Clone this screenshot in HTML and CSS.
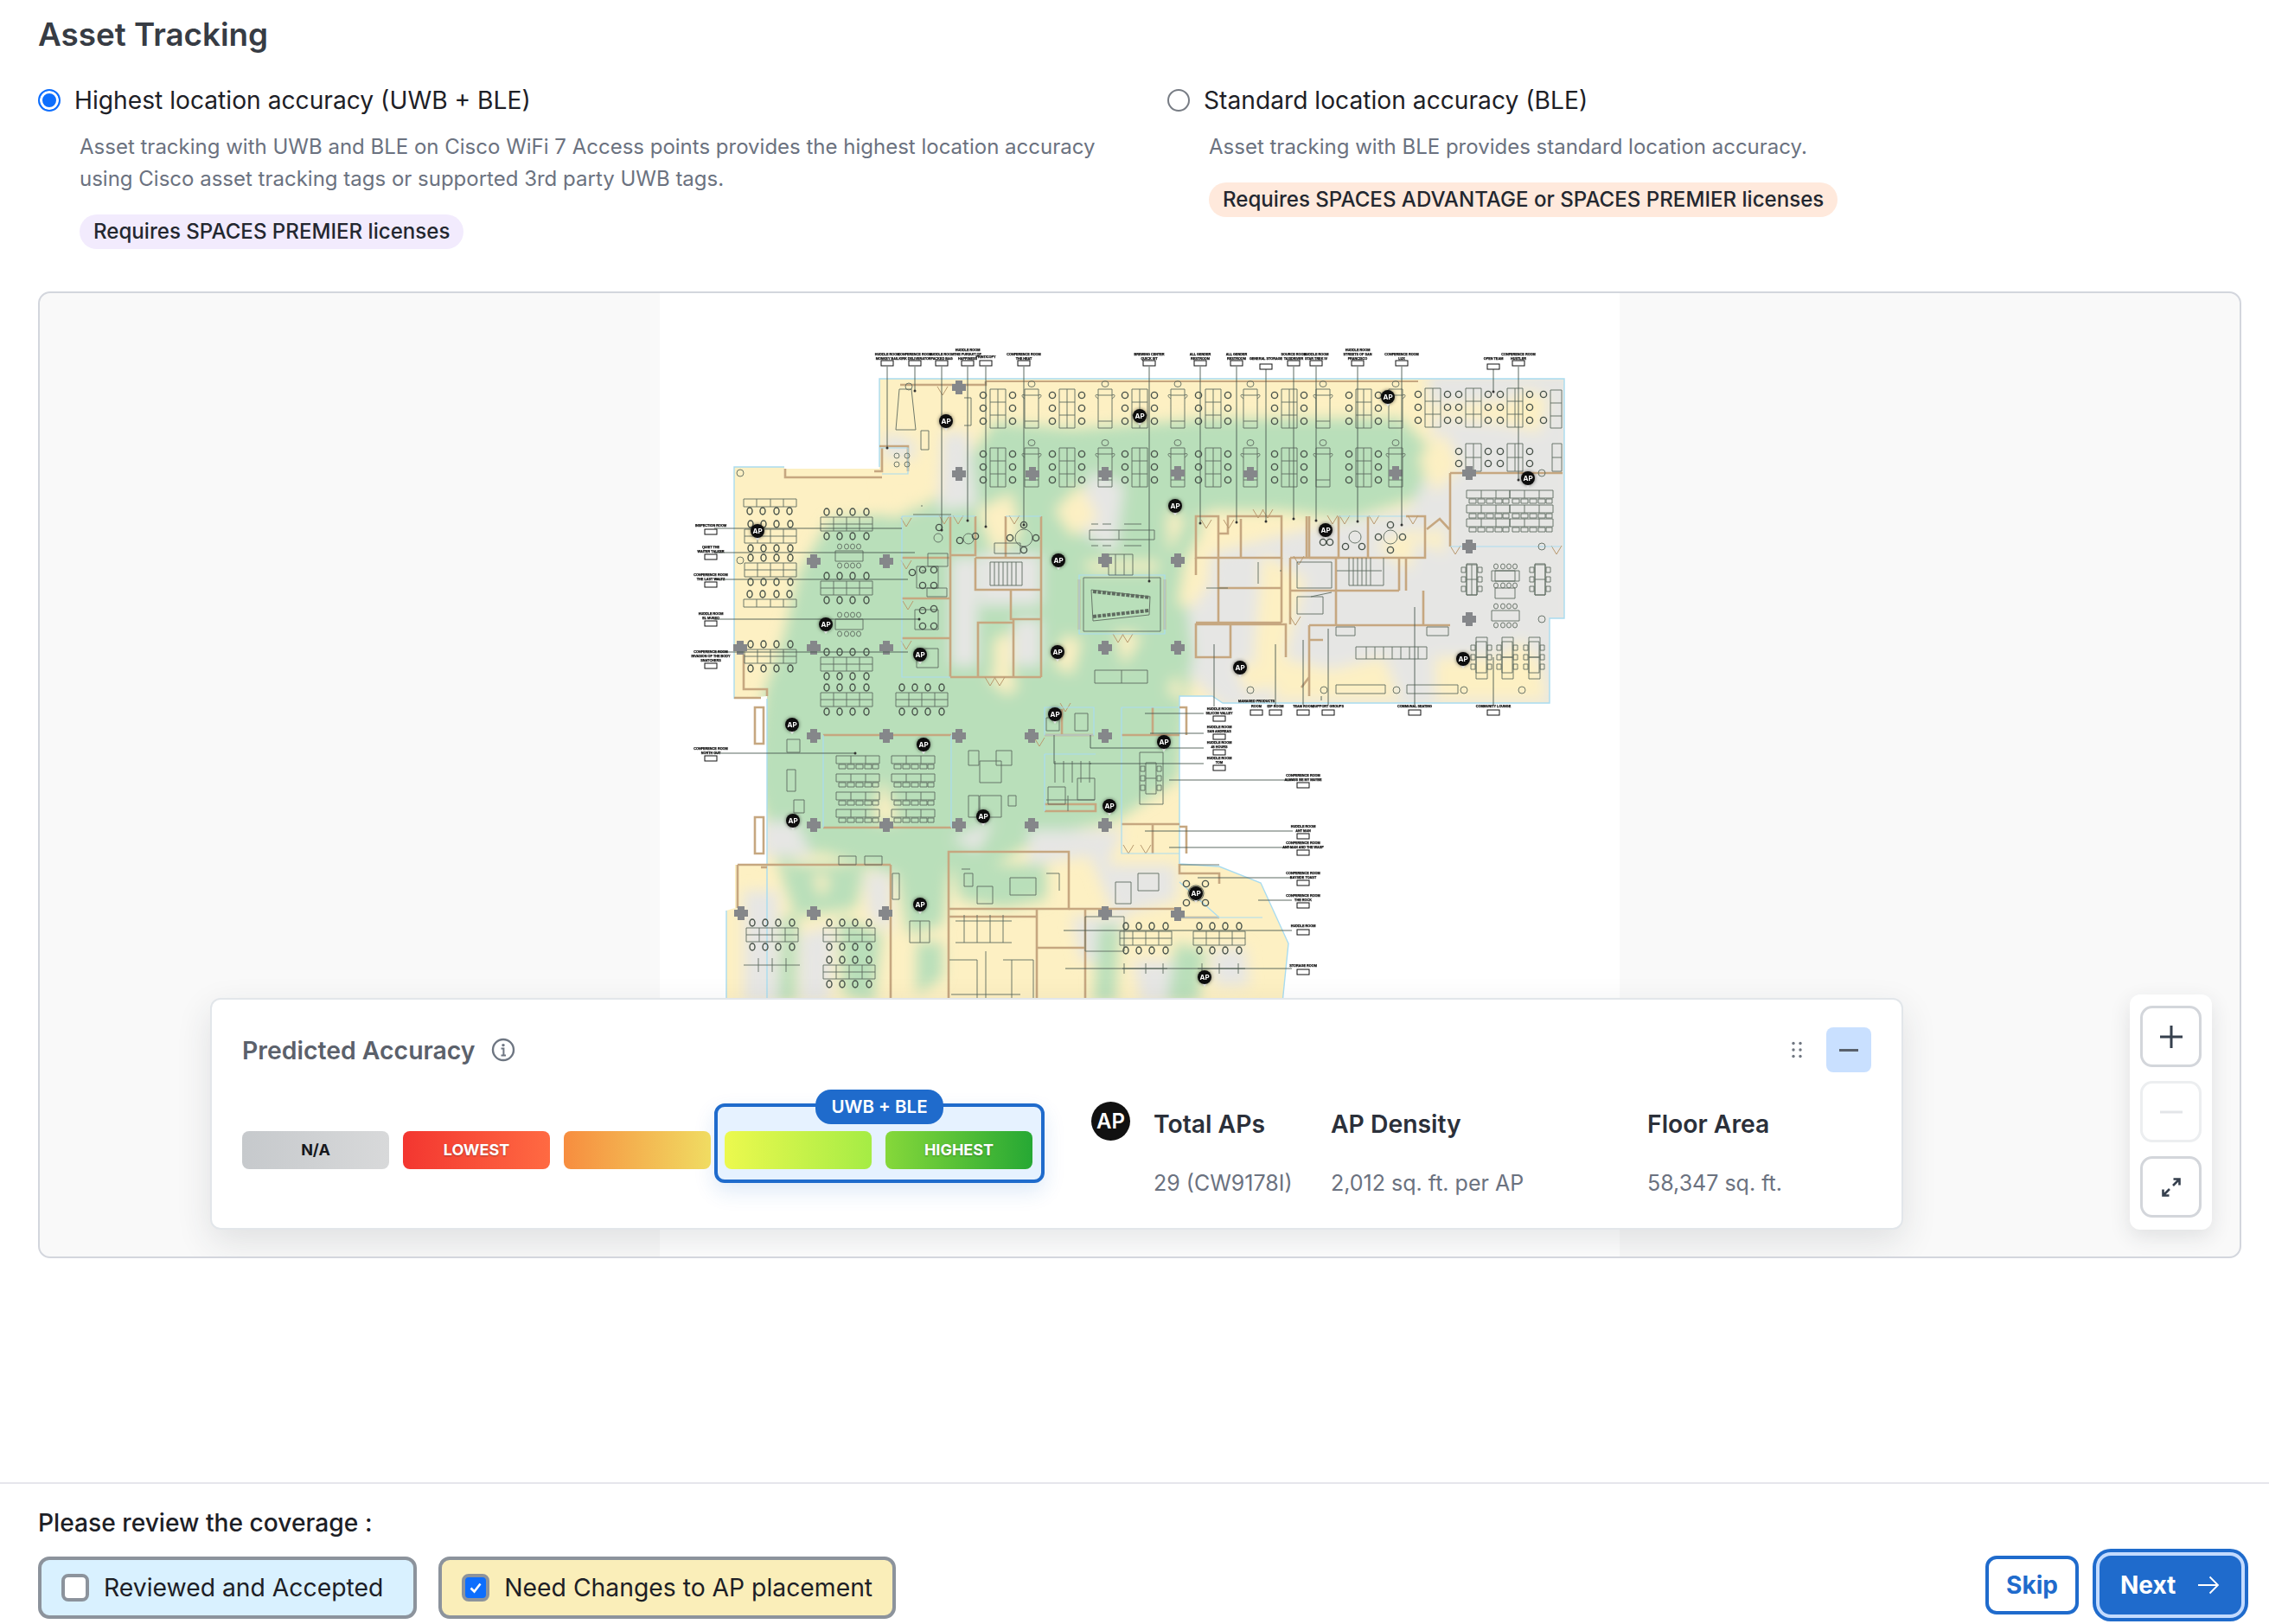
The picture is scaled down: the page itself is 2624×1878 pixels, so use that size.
FILE: index.html
```html
<!DOCTYPE html>
<html>
<head>
  <title>Asset Tracking</title>
  <meta http-equiv="Content-Type" content="text/html; charset=utf-8" />
  <link rel="stylesheet" href="styles.css">
</head>
<body>
  <main class="content">
    <h1 class="page-title">Asset Tracking</h1>

    <div class="options">
      <div class="option">
        <div class="option-label"><span class="radio radio-on"></span>Highest location accuracy (UWB + BLE)</div>
        <p class="option-desc">Asset tracking with UWB and BLE on Cisco WiFi 7 Access points provides the highest location accuracy using Cisco asset tracking tags or supported 3rd party UWB tags.</p>
        <span class="pill pill-purple">Requires SPACES PREMIER licenses</span>
      </div>
      <div class="option">
        <div class="option-label"><span class="radio"></span>Standard location accuracy (BLE)</div>
        <p class="option-desc">Asset tracking with BLE provides standard location accuracy.</p>
        <span class="pill pill-orange">Requires SPACES ADVANTAGE or SPACES PREMIER licenses</span>
      </div>
    </div>

    <section class="canvas">
      <svg class="plan" width="1110" height="1114" viewBox="763 339 1110 1114">
        <defs>
          <clipPath id="outline">
            <path d="M1017 438H1809V715H1792V813H1414L1402 805H1364V999L1410 1002 1458 1021 1490 1091 1483 1160H840V1053L850 1050V1000H887V805L849 808V540H907V542H1017Z"/>
          </clipPath>
          <filter id="soft" x="-10%" y="-10%" width="120%" height="120%"><feGaussianBlur stdDeviation="8"/></filter>
          <filter id="glow" x="-50%" y="-50%" width="200%" height="200%"><feDropShadow dx="0" dy="0" stdDeviation="2" flood-color="#000" flood-opacity=".55"/></filter>

          <g id="chair"><circle class="seat" r="3.6"/></g>
          <g id="desk6">
            <path d="M-9-22H9V23H-9ZM0-22V23M-9-7H9M-9 8H9"/>
            <use href="#chair" x="-17" y="-15"/><use href="#chair" x="-17" y="0"/><use href="#chair" x="-17" y="15"/>
            <use href="#chair" x="17" y="-15"/><use href="#chair" x="17" y="0"/><use href="#chair" x="17" y="15"/>
          </g>
          <g id="desk2">
            <path d="M-8-22H8V23H-8ZM-8-15H8M-8 15H8M-8-15C-12-17-12-13-8-11M8-15C12-17 12-13 8-11"/>
            <ellipse cx="0" cy="-28" rx="4" ry="3.5"/>
          </g>
          <g id="desk4">
            <path d="M-30-8H30V8H-30ZM-15-8V8M0-8V8M15-8V8M-30 0H30"/>
            <ellipse class="seat" cx="-23" cy="-14" rx="3" ry="4"/><ellipse class="seat" cx="-8" cy="-14" rx="3" ry="4"/><ellipse class="seat" cx="7" cy="-14" rx="3" ry="4"/><ellipse class="seat" cx="23" cy="-14" rx="3" ry="4"/>
            <ellipse class="seat" cx="-23" cy="14" rx="3" ry="4"/><ellipse class="seat" cx="-8" cy="14" rx="3" ry="4"/><ellipse class="seat" cx="7" cy="14" rx="3" ry="4"/><ellipse class="seat" cx="23" cy="14" rx="3" ry="4"/>
          </g>
          <g id="table">
            <path d="M-16-6H16V6H-16Z"/>
            <ellipse cx="-11" cy="-11" rx="2.5" ry="3"/><ellipse cx="-3" cy="-11" rx="2.5" ry="3"/><ellipse cx="4" cy="-11" rx="2.5" ry="3"/><ellipse cx="11" cy="-11" rx="2.5" ry="3"/>
            <ellipse cx="-11" cy="11" rx="2.5" ry="3"/><ellipse cx="-3" cy="11" rx="2.5" ry="3"/><ellipse cx="4" cy="11" rx="2.5" ry="3"/><ellipse cx="11" cy="11" rx="2.5" ry="3"/>
          </g>
          <g id="bench3">
            <path d="M-25-4H25V5H-25ZM-8-4V5M9-4V5"/>
            <path d="M-22 6H-14V11H-22ZM-12 6H-4V11H-12ZM-2 6H6V11H-2ZM8 6H16V11H8ZM17 6H24V11H17Z"/>
          </g>
          <g id="tvtable">
            <path d="M-6-18H6V18H-6ZM-6 0H6"/>
            <path d="M-12-14H-7V-8H-12ZM-12-3H-7V3H-12ZM-12 8H-7V14H-12ZM7-14H12V-8H7ZM7-3H12V3H7ZM7 8H12V14H7Z"/>
          </g>
          <path id="door" d="M-6-5 0 5 6-5"/>
          <path id="cross" d="M-4-8H4V-4H8V4H4V8H-4V4H-8V-4H-4Z"/>
          <g id="ap">
            <path d="M-3 7H3L0 11Z" fill="#fff"/>
            <circle r="8" fill="#111" filter="url(#glow)"/>
            <text class="ap-text" y="2.6">AP</text>
          </g>
          <rect id="tagbox" class="tag-box" x="-7" y="0" width="14" height="6"/>
        </defs>

        <rect class="plan-bg" x="763" y="339" width="1110" height="1114"/>

        <!-- heat map -->
        <g clip-path="url(#outline)">
          <rect x="830" y="430" width="990" height="740" fill="#fdf0c3"/>
          <g filter="url(#soft)">
            <path fill="#b9dfba" d="M1150 488 1240 496 1400 484 1620 484 1655 520 1640 575 1560 600 1480 590 1400 590 1370 650 1392 720 1375 790 1364 900 1290 950 1210 965 1150 1000 1030 1010 950 985 900 1000 872 900 884 800 905 740 925 660 960 600 1030 595 1100 560Z"/>
            <path fill="#e6e6e4" d="M1650 430H1820V820H1415L1375 780 1395 700 1400 640 1520 610 1630 590 1660 530Z"/>
            <path fill="#e6e6e4" d="M1022 530H1058V510L1022 500ZM1090 500 1120 500 1130 585 1085 590ZM1100 645H1130V770H1100ZM1132 640H1204V700H1132ZM1172 716H1204V770H1172ZM1262 545 1300 560 1290 640 1240 610ZM1370 680 1480 700 1440 780 1380 760Z"/>
            <path fill="#e6e6e4" d="M860 1030H900V1160H860ZM925 1080 965 1070 960 1160H925ZM1000 1010H1030V1080L1005 1060ZM1190 960 1300 960 1280 1000 1360 1000V1040L1290 1060 1260 990 1190 1000ZM1240 1060H1300L1290 1120 1250 1110ZM1310 1110H1360V1160H1320ZM920 950H880V990H940ZM1150 950 1100 970 1130 985ZM1400 1100 1440 1095 1445 1140 1405 1140Z"/>
            <path fill="#b9dfba" d="M900 1000H1000L990 1050 920 1060ZM905 1060H922L920 1160H900ZM970 1060 1020 1080 1010 1160 975 1150ZM1035 1000 1100 990 1090 1070 1050 1080ZM1060 1090H1090V1130L1060 1150ZM1100 1000H1210V1040L1160 1050 1110 1040ZM1270 1070H1295L1290 1160H1265ZM1360 1090 1395 1100 1385 1160H1350Z"/>
            <path fill="#fdf0c3" d="M1018 540 1048 560 1056 590 1030 600ZM1040 540 1090 570 1060 590ZM1130 590 1170 570 1180 620 1150 640ZM1220 590 1250 560 1270 600 1240 620ZM1380 600 1410 590 1400 610ZM1350 590 1370 600 1352 640ZM1370 650 1392 660 1385 700 1362 700ZM1254 650H1340L1338 660H1260ZM1230 735 1250 740 1240 780 1220 770ZM1150 740 1170 730 1170 790 1150 795ZM1140 780 1180 790 1165 805ZM1290 730 1320 735 1300 770ZM1360 780 1370 810 1350 800Z"/>
            <path fill="#fdf0c3" d="M1460 640 1510 670 1480 780 1450 760ZM1430 770 1480 760 1560 780 1440 800ZM1480 790 1600 760 1620 810H1470ZM1660 760 1780 760 1790 810H1660ZM1720 770 1760 740 1780 770ZM1760 450 1790 460 1780 500 1740 490ZM1640 470 1760 462 1740 490 1640 480ZM1630 620 1670 610 1670 640ZM1590 630 1640 610 1630 660ZM1640 530 1670 500 1690 540 1660 570ZM940 1010 960 1015 950 1040ZM1020 900 1040 950 1010 950Z"/>
          </g>
        </g>

        <!-- outer glass line -->
        <path class="glass" d="M1017 540V438H1809V715H1792V813H1414L1402 805H1364V999L1410 1002 1458 1021 1490 1091 1483 1160M887 808V1160M840 1160V1053M849 808V540H907"/>

        <!-- walls -->
        <g class="walls">
          <path d="M1041 445H1140V441M1017 516H1050V517M1020 518V545H1011M908 542V552H1020M849 807H880M860 757V797H887V805M1050 516V545"/>
          <path class="wall-thin" d="M1140 441H1640"/>
          <path d="M1043 645H1099M1043 692H1099M1043 738H1099M1099 597V783M1128 597V642H1099M1163 597V645M1099 783H1204M1204 597V783M1128 645H1204M1128 645V682H1204M1169 682V716H1204M1131 720H1172V783H1131ZM1172 716V783"/>
          <path d="M1383 597H1409V617H1420V597H1482V645H1383ZM1409 617V645M1435 600V645M1511 597V645M1514 597V645M1514 645H1548V597M1582 597V645M1626 597H1648V645H1626"/>
          <path d="M1383 645V665M1409 645V720M1482 645V720M1409 680H1482M1383 720H1482M1383 722H1423V760H1383ZM1492 645V722M1492 645H1626M1545 645V723M1492 683H1618M1618 645V683M1646 683V723M1626 645V683M1514 723H1677M1677 547V632M1677 547H1807M1650 612L1665 600 1676 612"/>
          <path d="M1423 722H1487V760M1487 722V760M1514 723V805M1514 740H1530M1514 783 1505 795"/>
          <path d="M1248 670V728M1347 670V728"/>
          <path d="M1030 1000V1157M853 1000H1030M853 1000V1050M880 1003H887"/>
          <path d="M952 850H1100M952 957H1100"/>
          <path d="M1364 850H1297M1297 953H1364M1333 818V850M1333 953V987M1364 818H1372V850M1364 956H1372V987M873 818H883V860H873ZM873 945H883V987H873Z"/>
          <path d="M1097 985H1236V1051H1097ZM1097 1051V1157M1097 1060H1199M1199 1051V1157M1208 938H1267V930H1208"/>
          <path d="M1255 1051V1157M1199 1096H1255M1364 999V1010H1410V1022M1410 1061H1364V1051M1236 1051H1364"/>
          <path d="M1208 850H1265M1228 820V850"/>
        </g>

        <!-- doors -->
        <g class="doors">
          <use href="#door" x="1092" y="601"/><use href="#door" x="1108" y="601"/><use href="#door" x="1173" y="601"/><use href="#door" x="1293" y="738"/><use href="#door" x="1304" y="738"/>
          <use href="#door" x="1145" y="788"/><use href="#door" x="1156" y="788"/><use href="#door" x="1455" y="594"/><use href="#door" x="1466" y="594"/><use href="#door" x="1395" y="606"/><use href="#door" x="1421" y="606"/>
          <use href="#door" x="1502" y="648"/><use href="#door" x="1541" y="601"/><use href="#door" x="1555" y="601"/><use href="#door" x="1589" y="601"/><use href="#door" x="1634" y="601"/><use href="#door" x="1683" y="636"/><use href="#door" x="1800" y="636"/>
          <use href="#door" x="1498" y="718"/><use href="#door" x="1048" y="604"/><use href="#door" x="1048" y="653"/><use href="#door" x="1048" y="746"/><use href="#door" x="1050" y="700"/>
          <use href="#door" x="1090" y="452"/><use href="#door" x="1202" y="858"/><use href="#door" x="1232" y="818"/><use href="#door" x="1305" y="982"/><use href="#door" x="1325" y="982"/>
        </g>

        <!-- thin glass rooms -->
        <path class="glass-in" d="M1017 518H1050V548H1020M1043 597H1128M1043 597V783H1099M1163 597H1204M1248 665H1347V733H1248ZM1208 818H1265V850H1208ZM1208 872H1267M1297 818H1364M1297 818V987H1364M952 850V957M1100 850V957M1548 597H1626M1677 632H1805M1208 872V938M1364 1020 1410 1061M1364 1061H1460"/>

        <!-- rooms detail -->
        <g class="ink">
          <path d="M1040 450H1054L1059 497H1036Z"/>
          <path d="M1065 498H1074V520H1065ZM1115 460H1123V492H1115M1065 585H1067"/>
          <path d="M1150 628H1180V640H1150ZM1145 650H1182V677H1145ZM1150 650V677M1155 650V677M1160 650V677M1165 650V677M1170 650V677M1175 650V677"/>
          <path d="M1056 595H1100M1066 660H1070M1073 640H1096V655H1073ZM1072 680H1095V690H1072ZM1260 613H1335V624H1260ZM1294 613V624M1262 606H1270M1275 606H1285M1300 606H1320M1262 631H1270M1275 631H1285M1300 631H1320M1266 775H1327V790H1266ZM1297 775V790"/>
          <path d="M1282 641H1310V665H1282ZM1290 641V665M1300 641V665"/>
          <path d="M1253 668H1342V730H1253ZM1262 682 1330 690 1329 711 1264 718Z"/>
          <path class="chain" d="M1264 684 1330 691M1264 713 1329 706"/>
          <path d="M1395 680H1420M1540 685 1516 690M1500 650H1540V680H1500ZM1480 660H1482M1455 650V675M1546 660H1598M1560 645V677H1600V645M1565 645V677M1570 645V677M1575 645V677M1580 645V677M1585 645V677"/>
          <path d="M1500 690H1530V710H1500ZM1568 748H1650V762H1568ZM1580 748V762M1590 748V762M1600 748V762M1610 748V762M1620 748V762M1630 748V762M1640 748V762M1545 725H1567V735H1545ZM1650 725H1675V735H1650ZM1545 792H1602V802H1545ZM1627 792H1686V802H1627Z"/>
          <path d="M1702 653V688M1696 653H1708V688H1696ZM1729 660H1752V672H1729ZM1729 680H1752V692H1729ZM1775 653H1787V688H1775Z"/>
          <path d="M1707 737H1720V785H1707ZM1707 760H1720M1737 737H1750V785H1737ZM1737 760H1750M1768 737H1781V785H1768ZM1768 760H1781"/>
          <path d="M1130 1025H1148V1045H1130ZM1168 1015H1198V1035H1168ZM1115 1010H1125V1025H1115ZM1112 1005H1122M1210 1010H1225V1030"/>
          <path d="M1220 880V905M1230 880V905M1240 880V905M1250 880V905M1260 880V905M1210 925H1266M1235 920V938M1246 900H1266V925H1246ZM1212 910H1232V930H1212Z"/>
          <path d="M1318 870H1345V930H1318Z"/>
          <path d="M1115 1058V1090M1130 1058V1090M1145 1058V1090M1160 1058V1090M1105 1090H1170M1105 1065H1170"/>
          <path d="M1120 868H1132V885H1120ZM1152 868H1170V885H1152ZM1133 880H1158V905H1133ZM1133 920H1158V945H1133ZM1120 920H1132V945H1120ZM1166 920H1175V932H1166Z"/>
          <path d="M1255 1060H1300V1100H1255ZM1316 1010H1340V1030H1316ZM1290 1020H1308V1045H1290ZM1365 1000H1410"/>
          <path d="M910 890H920V915H910ZM918 925H930V940H918ZM910 855H925V870H910ZM1210 830H1225V845H1210ZM1243 825H1258V845H1243Z"/>
          <path d="M860 1116H925M877 1108V1124M893 1108V1124M909 1108V1124"/>
          <path d="M1298 1120H1350M1385 1120H1440M1300 1114V1126M1325 1114V1126M1345 1114V1126M1390 1114V1126M1410 1114V1126M1432 1114V1126"/>
          <path d="M1098 1110H1130M1130 1110V1155M1100 1150H1180M1140 1100V1155M1160 1110H1195V1155M1170 1110V1155"/>
          <path d="M1064 1065V1090M1052 1065H1075V1090H1052Z"/>
          <path d="M1000 990H1020V1000H1000ZM970 990H990V1000H970ZM1032 1010H1040V1040H1032Z"/>
        </g>

        <!-- workstation rows -->
        <g class="ink">
          <use href="#desk6" x="1154" y="472"/><use href="#desk2" x="1193" y="472"/><use href="#desk6" x="1234" y="472"/><use href="#desk2" x="1278" y="472"/>
          <use href="#desk6" x="1318" y="472"/><use href="#desk2" x="1362" y="472"/><use href="#desk6" x="1403" y="472"/><use href="#desk2" x="1446" y="472"/>
          <use href="#desk6" x="1491" y="472"/><use href="#desk2" x="1530" y="472"/><use href="#desk6" x="1577" y="472"/><use href="#desk2" x="1614" y="472"/>
          <use href="#desk6" x="1657" y="471"/><use href="#desk6" x="1704" y="471"/><use href="#desk6" x="1752" y="471"/>
          <path d="M1793 451H1806V495H1793ZM1793 466H1806M1793 481H1806"/><use href="#chair" x="1785" y="456"/><use href="#chair" x="1785" y="486"/>
          <use href="#desk6" x="1154" y="540"/><use href="#desk2" x="1193" y="540"/><use href="#desk6" x="1234" y="540"/><use href="#desk2" x="1278" y="540"/>
          <use href="#desk6" x="1318" y="540"/><use href="#desk2" x="1362" y="540"/><use href="#desk6" x="1403" y="540"/><use href="#desk2" x="1446" y="540"/>
          <use href="#desk6" x="1491" y="540"/><use href="#desk2" x="1530" y="540"/><use href="#desk6" x="1577" y="540"/><use href="#desk2" x="1614" y="540"/>
          <path d="M1695 513H1713V545H1695ZM1704 513V545M1695 529H1713M1743 513H1761V545H1743ZM1752 513V545M1743 529H1761M1795 513H1806V545H1795ZM1795 529H1806"/>
          <use href="#chair" x="1687" y="522"/><use href="#chair" x="1721" y="522"/><use href="#chair" x="1687" y="536"/><use href="#chair" x="1721" y="536"/>
          <use href="#chair" x="1735" y="522"/><use href="#chair" x="1769" y="522"/><use href="#chair" x="1735" y="536"/><use href="#chair" x="1769" y="536"/>

          <path d="M860 577H921V586H860ZM875 577V586M891 577V586M906 577V586"/>
          <use href="#desk4" x="891" y="620"/><use href="#desk4" x="891" y="659"/><use href="#desk4" x="891" y="759"/>
          <path d="M860 693H921V702H860ZM875 693V702M891 693V702M906 693V702"/>
          <g class="seat"><ellipse cx="867" cy="591" rx="3" ry="4"/><ellipse cx="882" cy="591" rx="3" ry="4"/><ellipse cx="898" cy="591" rx="3" ry="4"/><ellipse cx="913" cy="591" rx="3" ry="4"/>
          <ellipse cx="867" cy="687" rx="3" ry="4"/><ellipse cx="882" cy="687" rx="3" ry="4"/><ellipse cx="898" cy="687" rx="3" ry="4"/><ellipse cx="913" cy="687" rx="3" ry="4"/></g>

          <use href="#desk4" x="979" y="606"/><use href="#desk4" x="979" y="680"/><use href="#desk4" x="979" y="768"/><use href="#desk4" x="979" y="809"/><use href="#desk4" x="1066" y="809"/>
          <use href="#table" x="982" y="643"/><use href="#table" x="982" y="722"/>
          <use href="#desk4" x="893" y="1081"/><use href="#desk4" x="982" y="1081"/><use href="#desk4" x="982" y="1124"/><use href="#desk4" x="1325" y="1085"/><use href="#desk4" x="1410" y="1085"/>

          <path d="M1060 655H1085V680H1060ZM1058 705H1085V728H1058ZM1060 750H1085V772H1060Z"/>
          <use href="#chair" x="1055" y="662"/><use href="#chair" x="1067" y="659"/><use href="#chair" x="1080" y="659"/><use href="#chair" x="1067" y="677"/><use href="#chair" x="1080" y="677"/>
          <use href="#chair" x="1067" y="706"/><use href="#chair" x="1080" y="704"/><use href="#chair" x="1067" y="724"/><use href="#chair" x="1080" y="724"/>

          <use href="#chair" x="1086" y="610"/><circle cx="1085" cy="622" r="5"/><circle cx="1120" cy="623" r="6"/><use href="#chair" x="1110" y="625"/><use href="#chair" x="1128" y="620"/>
          <circle cx="1184" cy="622" r="10"/><use href="#chair" x="1184" y="607"/><use href="#chair" x="1184" y="636"/><use href="#chair" x="1168" y="622"/><use href="#chair" x="1198" y="622"/>
          <circle cx="1051" cy="447" r="4"/><circle cx="856" cy="547" r="4"/><circle cx="856" cy="648" r="4"/>
          <circle cx="1037" cy="527" r="3"/><circle cx="1049" cy="527" r="3"/><circle cx="1037" cy="537" r="3"/><circle cx="1049" cy="537" r="3"/>

          <use href="#bench3" x="992" y="878"/><use href="#bench3" x="1056" y="878"/><use href="#bench3" x="992" y="899"/><use href="#bench3" x="1056" y="899"/>
          <use href="#bench3" x="992" y="920"/><use href="#bench3" x="1056" y="920"/><use href="#bench3" x="992" y="940"/><use href="#bench3" x="1056" y="940"/>
          <use href="#tvtable" x="1331" y="900"/>

          <use href="#bench3" x="1721" y="571"/><use href="#bench3" x="1771" y="571"/><use href="#bench3" x="1721" y="588"/><use href="#bench3" x="1771" y="588"/><use href="#bench3" x="1721" y="604"/><use href="#bench3" x="1771" y="604"/>
          <use href="#table" x="1741" y="712"/><use href="#table" x="1741" y="666"/>
          <use href="#tvtable" x="1702" y="670"/><use href="#tvtable" x="1781" y="670"/><use href="#tvtable" x="1713" y="760"/><use href="#tvtable" x="1743" y="760"/><use href="#tvtable" x="1774" y="760"/>
          <circle cx="1783" cy="547" r="4"/><circle cx="1783" cy="632" r="4"/><circle cx="1783" cy="716" r="4"/><circle cx="1760" cy="798" r="4"/><circle cx="1693" cy="798" r="4"/><circle cx="1615" cy="798" r="4"/><circle cx="1531" cy="798" r="4"/><circle cx="1446" cy="798" r="4"/>
          <circle cx="1567" cy="621" r="7"/><circle cx="1608" cy="621" r="8"/><use href="#chair" x="1608" y="607"/><use href="#chair" x="1608" y="636"/><use href="#chair" x="1594" y="621"/><use href="#chair" x="1622" y="621"/>
          <use href="#chair" x="1530" y="627"/><use href="#chair" x="1538" y="627"/><use href="#chair" x="1556" y="632"/><use href="#chair" x="1575" y="632"/>
          <circle cx="1383" cy="1033" r="9"/><use href="#chair" x="1372" y="1022"/><use href="#chair" x="1394" y="1022"/><use href="#chair" x="1372" y="1044"/><use href="#chair" x="1394" y="1044"/>
        </g>

        <!-- dividers -->
        <g class="posts">
          <use href="#cross" x="1109" y="448"/><use href="#cross" x="1109" y="548"/><use href="#cross" x="1194" y="548"/><use href="#cross" x="1278" y="548"/><use href="#cross" x="1362" y="547"/><use href="#cross" x="1446" y="548"/><use href="#cross" x="1614" y="547"/><use href="#cross" x="1699" y="547"/><use href="#cross" x="1699" y="632"/><use href="#cross" x="1699" y="716"/>
          <use href="#cross" x="941" y="649"/><use href="#cross" x="1025" y="649"/><use href="#cross" x="1278" y="648"/><use href="#cross" x="1362" y="648"/>
          <use href="#cross" x="856" y="749"/><use href="#cross" x="941" y="749"/><use href="#cross" x="1025" y="749"/><use href="#cross" x="1278" y="749"/><use href="#cross" x="1362" y="749"/>
          <use href="#cross" x="941" y="851"/><use href="#cross" x="1025" y="851"/><use href="#cross" x="1109" y="851"/><use href="#cross" x="1193" y="851"/><use href="#cross" x="1278" y="851"/>
          <use href="#cross" x="941" y="954"/><use href="#cross" x="1025" y="954"/><use href="#cross" x="1109" y="954"/><use href="#cross" x="1193" y="954"/><use href="#cross" x="1278" y="954"/>
          <use href="#cross" x="857" y="1056"/><use href="#cross" x="941" y="1056"/><use href="#cross" x="1024" y="1056"/><use href="#cross" x="1278" y="1056"/><use href="#cross" x="1362" y="1057"/>
        </g>

        <!-- leader lines -->
        <path class="leaders" d="M1026 424V518M1058 424V452M1089 424V613M1119 424V602M1140 424V609M1184 424V607M1329 424V672M1388 424V605M1430 424V604M1464 424V603M1496 424V600M1522 424V602M1570 424V603M1621 424V607M1727 424V453M1756 424V555M826 611H1043M826 639H1058M826 670H1050M826 716H1063M826 754H1050M826 871H989M1528 810V805M1404 745V817M1475 745V815M1507 740V815M1536 727V815M1636 702V815M1727 760V815M1324 825H1392M1330 848H1392M1300 865H1392M1260 883H1392M1352 902H1500M1324 961H1495M1352 980H1495M1385 1015H1494M1455 1041H1494M1230 1076H1494M1232 1120H1494M1219 850V883H1262M1261 850V865H1300"/>
        <path class="dots" d="M1026 518h.01M1058 452h.01M1089 613h.01M1119 602h.01M1140 609h.01M1184 607h.01M1329 672h.01M1388 605h.01M1430 604h.01M1464 603h.01M1496 600h.01M1522 602h.01M1570 603h.01M1621 607h.01M1727 453h.01M1756 555h.01M1063 716h.01M989 871h.01"/>

        <!-- room tags -->
        <g class="tags">
          <g transform="translate(1026 411)"><text>HUDDLE ROOM</text><text y="5">MONKEY BAIL</text><use href="#tagbox" y="6"/></g>
          <g transform="translate(1058 411)"><text>CONFERENCE ROOM</text><text y="5">KIRK DELIVERATOR</text><use href="#tagbox" y="6"/></g>
          <g transform="translate(1089 411)"><text>HUDDLE ROOM</text><text y="5">PACKED BAG</text><use href="#tagbox" y="6"/></g>
          <g transform="translate(1119 406)"><text>HUDDLE ROOM</text><text y="5">THE PURSUIT OF</text><text y="10">HAPPINESS</text><use href="#tagbox" y="11"/></g>
          <g transform="translate(1140 414)"><text>PRINT/COPY</text><use href="#tagbox" y="3"/></g>
          <g transform="translate(1184 411)"><text>CONFERENCE ROOM</text><text y="5">THE HEAT</text><use href="#tagbox" y="6"/></g>
          <g transform="translate(1329 411)"><text>BREWING CENTER</text><text y="5">QUICK SIT</text><use href="#tagbox" y="6"/></g>
          <g transform="translate(1388 411)"><text>ALL GENDER</text><text y="5">RESTROOM</text><use href="#tagbox" y="6"/></g>
          <g transform="translate(1430 411)"><text>ALL GENDER</text><text y="5">RESTROOM</text><use href="#tagbox" y="6"/></g>
          <g transform="translate(1464 416)"><text>GENERAL STORAGE</text><use href="#tagbox" y="5"/></g>
          <g transform="translate(1496 411)"><text>SOURCE ROOM</text><text y="5">TAXIDRIVER</text><use href="#tagbox" y="6"/></g>
          <g transform="translate(1522 411)"><text>HUDDLE ROOM</text><text y="5">STAR TREK IV</text><use href="#tagbox" y="6"/></g>
          <g transform="translate(1570 406)"><text>HUDDLE ROOM</text><text y="5">STREETS OF SAN</text><text y="10">FRANCISCO</text><use href="#tagbox" y="11"/></g>
          <g transform="translate(1621 411)"><text>CONFERENCE ROOM</text><text y="5">LUX</text><use href="#tagbox" y="6"/></g>
          <g transform="translate(1727 416)"><text>OPEN TEAM</text><use href="#tagbox" y="5"/></g>
          <g transform="translate(1756 411)"><text>CONFERENCE ROOM</text><text y="5">HUSTLER</text><use href="#tagbox" y="6"/></g>
          <g transform="translate(822 609)"><text>INSPECTION ROOM</text><use href="#tagbox" y="3"/></g>
          <g transform="translate(822 634)"><text>QUIET THE</text><text y="5">WAITER TALKER</text><use href="#tagbox" y="7"/></g>
          <g transform="translate(822 666)"><text>CONFERENCE ROOM</text><text y="5">THE LAST WALTZ</text><use href="#tagbox" y="7"/></g>
          <g transform="translate(822 711)"><text>HUDDLE ROOM</text><text y="5">EL MUSEO</text><use href="#tagbox" y="7"/></g>
          <g transform="translate(822 755)"><text>CONFERENCE ROOM</text><text y="5">INVASION OF THE BODY</text><text y="10">SNATCHERS</text><use href="#tagbox" y="12"/></g>
          <g transform="translate(822 867)"><text>CONFERENCE ROOM</text><text y="5">NORTH OUT</text><use href="#tagbox" y="7"/></g>
          <g transform="translate(1410 821)"><text>HUDDLE ROOM</text><text y="5">SILICON VALLEY</text><use href="#tagbox" y="7"/></g>
          <g transform="translate(1410 842)"><text>HUDDLE ROOM</text><text y="5">SAN ANDREAS</text><use href="#tagbox" y="7"/></g>
          <g transform="translate(1410 860)"><text>HUDDLE ROOM</text><text y="5">48 HOURS</text><use href="#tagbox" y="7"/></g>
          <g transform="translate(1410 878)"><text>HUDDLE ROOM</text><text y="5">TOM</text><use href="#tagbox" y="7"/></g>
          <g transform="translate(1507 898)"><text>CONFERENCE ROOM</text><text y="5">ALWAYS BE MY MAYBE</text><use href="#tagbox" y="7"/></g>
          <g transform="translate(1507 957)"><text>HUDDLE ROOM</text><text y="5">ANT MAN</text><use href="#tagbox" y="7"/></g>
          <g transform="translate(1507 976)"><text>CONFERENCE ROOM</text><text y="5">ANT MAN AND THE WASP</text><use href="#tagbox" y="7"/></g>
          <g transform="translate(1507 1011)"><text>CONFERENCE ROOM</text><text y="5">BAYSIDE TOAST</text><use href="#tagbox" y="7"/></g>
          <g transform="translate(1507 1037)"><text>CONFERENCE ROOM</text><text y="5">THE ROCK</text><use href="#tagbox" y="7"/></g>
          <g transform="translate(1507 1072)"><text>HUDDLE ROOM</text><use href="#tagbox" y="3"/></g>
          <g transform="translate(1507 1118)"><text>STORAGE ROOM</text><use href="#tagbox" y="3"/></g>
          <g transform="translate(1453 812)"><text>MANAGED PRODUCTS</text></g>
          <g transform="translate(1453 818)"><text>ROOM</text><use href="#tagbox" y="3"/></g>
          <g transform="translate(1475 818)"><text>IDF ROOM</text><use href="#tagbox" y="3"/></g>
          <g transform="translate(1507 818)"><text>TEAM ROOM</text><use href="#tagbox" y="3"/></g>
          <g transform="translate(1536 818)"><text>SUPPORT GROUPS</text><use href="#tagbox" y="3"/></g>
          <g transform="translate(1636 818)"><text>COMMUNAL SEATING</text><use href="#tagbox" y="3"/></g>
          <g transform="translate(1727 818)"><text>COMMUNITY LOUNGE</text><use href="#tagbox" y="3"/></g>
        </g>

        <!-- access points -->
        <use href="#ap" x="1094" y="487"/><use href="#ap" x="1318" y="481"/><use href="#ap" x="1359" y="585"/><use href="#ap" x="876" y="614"/><use href="#ap" x="1224" y="648"/>
        <use href="#ap" x="955" y="722"/><use href="#ap" x="1223" y="754"/><use href="#ap" x="1064" y="757"/><use href="#ap" x="1434" y="772"/><use href="#ap" x="1220" y="826"/>
        <use href="#ap" x="1346" y="858"/><use href="#ap" x="916" y="838"/><use href="#ap" x="1068" y="861"/><use href="#ap" x="1605" y="459"/><use href="#ap" x="1767" y="553"/>
        <use href="#ap" x="1533" y="613"/><use href="#ap" x="1692" y="762"/><use href="#ap" x="917" y="949"/><use href="#ap" x="1137" y="944"/><use href="#ap" x="1283" y="932"/>
        <use href="#ap" x="1064" y="1046"/><use href="#ap" x="1383" y="1033"/><use href="#ap" x="1393" y="1130"/>
      </svg>

      <div class="legend">
        <div class="legend-head">
          <span class="legend-title">Predicted Accuracy</span>
          <svg class="info-icon" width="28" height="28" viewBox="0 0 28 28"><circle cx="14" cy="14" r="12" fill="none" stroke="#6e7682" stroke-width="2.4"/><circle cx="14" cy="8.6" r="1.7" fill="#6e7682"/><path d="M11.5 12.5H14.4V20M11.5 20.4H17" fill="none" stroke="#6e7682" stroke-width="2"/></svg>
          <svg class="drag-icon" width="14" height="20" viewBox="0 0 14 20"><g fill="#6f7680"><circle cx="3" cy="2.5" r="1.7"/><circle cx="11" cy="2.5" r="1.7"/><circle cx="3" cy="10" r="1.7"/><circle cx="11" cy="10" r="1.7"/><circle cx="3" cy="17.5" r="1.7"/><circle cx="11" cy="17.5" r="1.7"/></g></svg>
          <span class="collapse-btn"><span class="collapse-bar"></span></span>
        </div>
        <div class="legend-body">
          <div class="scale">
            <div class="scale-frame"><span class="scale-badge">UWB + BLE</span></div>
            <span class="chip chip-na">N/A</span>
            <span class="chip chip-low">LOWEST</span>
            <span class="chip chip-mid"></span>
            <span class="chip chip-good"></span>
            <span class="chip chip-high">HIGHEST</span>
          </div>
          <span class="ap-badge">AP</span>
          <div class="stats">
            <div class="stat stat-aps"><b>Total APs</b><span>29 (CW9178I)</span></div>
            <div class="stat stat-density"><b>AP Density</b><span>2,012 sq. ft. per AP</span></div>
            <div class="stat"><b>Floor Area</b><span>58,347 sq. ft.</span></div>
          </div>
        </div>
      </div>

      <div class="zoom-tools">
        <span class="zoom-btn"><svg width="30" height="30" viewBox="0 0 30 30"><path d="M15 2V28M2 15H28" stroke="#36404e" stroke-width="3" fill="none"/></svg></span>
        <span class="zoom-btn zoom-off"><svg width="30" height="30" viewBox="0 0 30 30"><path d="M2 15H28" stroke="#e3e5e8" stroke-width="3" fill="none"/></svg></span>
        <span class="zoom-btn"><svg width="26" height="26" viewBox="0 0 26 26"><path d="M15.5 3.5H22.5V10.5M22.5 3.5 15 11M10.5 22.5H3.5V15.5M3.5 22.5 11 15" stroke="#36404e" stroke-width="2.6" fill="none"/></svg></span>
      </div>
    </section>
  </main>

  <footer class="review">
    <div>
      <div class="review-title">Please review the coverage :</div>
      <div class="review-choices">
        <label class="choice choice-blue"><span class="check"></span>Reviewed and Accepted</label>
        <label class="choice choice-yellow"><span class="check check-on"><svg width="18" height="18" viewBox="0 0 18 18"><path d="M3.5 9.5 7.5 13.5 14.5 4.5" fill="none" stroke="#fff" stroke-width="2.6"/></svg></span>Need Changes to AP placement</label>
      </div>
    </div>
    <div class="review-actions">
      <button class="btn btn-outline">Skip</button>
      <button class="btn btn-primary">Next<svg width="26" height="22" viewBox="0 0 26 22"><path d="M1 11H24M14.5 1.5 24 11 14.5 20.5" fill="none" stroke="#fff" stroke-width="1.8"/></svg></button>
    </div>
  </footer>
</body>
</html>
```

FILE: styles.css
```css
body {
  font-family: Inter, "Liberation Sans", sans-serif;
  background-color: #fff;
  color: #1d2026;
  margin: 0;
  height: 1878px;
  display: flex;
  flex-direction: column;
  overflow: hidden;
}

.content {
  padding: 18px 32px 0 44px;
  flex: 1;
}

.page-title {
  margin: 0;
  font-size: 36.8px;
  line-height: 44px;
  font-weight: 600;
  color: #373c44;
}

.options {
  display: grid;
  grid-template-columns: 1306px 1fr;
  margin-top: 36px;
  height: 239px;
}

.option-label {
  display: flex;
  align-items: center;
  gap: 16px;
  font-size: 28.2px;
  line-height: 36px;
  color: #1d2026;
}

.radio {
  width: 26px;
  height: 26px;
  box-sizing: border-box;
  border: 2px solid #777c84;
  border-radius: 50%;
  background-color: #fff;
}

.radio-on {
  border-color: #0d6efd;
  background-color: #0d6efd;
  box-shadow: inset 0 0 0 3px #fff;
}

.option-desc {
  margin: 17px 0 23px 48px;
  max-width: 1200px;
  font-size: 24px;
  line-height: 37px;
  color: #6b7280;
}

.pill {
  display: inline-block;
  margin-left: 48px;
  padding: 0 16px;
  height: 40px;
  line-height: 40px;
  border-radius: 20px;
  font-size: 24.1px;
  font-weight: 500;
  color: #23272f;
}

.pill-purple {
  background-color: #f2ebfd;
}

.pill-orange {
  background-color: #ffe9dc;
}

.canvas {
  position: relative;
  height: 1118px;
  box-sizing: border-box;
  border: 2px solid #d3d6dd;
  border-radius: 14px;
  background-color: #f9f9f9;
  display: flex;
  justify-content: center;
  overflow: hidden;
}

.plan {
  flex: none;
  filter: blur(0.45px);
}

.plan-bg {
  fill: #fff;
}

.glass {
  fill: none;
  stroke: #a9dcf0;
  stroke-width: 1.4;
}

.glass-in {
  fill: none;
  stroke: #a9dcf0;
  stroke-width: 1.2;
}

.walls {
  fill: none;
  stroke: #c6a780;
  stroke-width: 2.6;
}

.wall-thin {
  stroke-width: 1.8;
}

.doors {
  fill: none;
  stroke: #b99a70;
  stroke-width: 1;
}

.ink {
  fill: none;
  stroke: #5f6b60;
  stroke-width: 0.9;
}

.seat {
  stroke: #48524a;
  stroke-width: 1.4;
}

.chain {
  stroke-width: 4;
  stroke-dasharray: 4 1.5;
}

.posts {
  fill: #85878a;
}

.leaders {
  fill: none;
  stroke: #4b5a50;
  stroke-width: 0.9;
}

.dots {
  fill: none;
  stroke: #333;
  stroke-width: 3;
  stroke-linecap: round;
}

.tags text {
  font-family: "Liberation Sans", sans-serif;
  font-size: 3.8px;
  font-weight: 700;
  text-anchor: middle;
  fill: #111;
  stroke: #111;
  stroke-width: 0.25;
}

.tag-box {
  fill: #fff;
  stroke: #111;
  stroke-width: 1;
}

.ap-text {
  font-family: Inter, sans-serif;
  font-size: 8px;
  font-weight: 700;
  text-anchor: middle;
  fill: #fff;
}

.legend {
  position: absolute;
  left: 197px;
  top: 815px;
  width: 1958px;
  height: 268px;
  box-sizing: border-box;
  padding: 32px 35px 0 35px;
  background-color: #fff;
  border: 2px solid #e2e6ea;
  border-radius: 12px;
  box-shadow: 0 14px 40px rgba(40, 50, 60, 0.12);
}

.legend-head {
  display: flex;
  align-items: center;
  height: 52px;
}

.legend-title {
  font-size: 28.4px;
  font-weight: 600;
  color: #5b616b;
}

.info-icon {
  margin-left: 18px;
}

.drag-icon {
  margin-left: auto;
  margin-right: 27px;
}

.collapse-btn {
  width: 52px;
  height: 52px;
  border-radius: 8px;
  background-color: #c9e0ff;
  display: flex;
  align-items: center;
  justify-content: center;
}

.collapse-bar {
  width: 22px;
  height: 3px;
  background-color: #58606c;
}

.legend-body {
  display: flex;
  margin-top: 20px;
}

.scale {
  position: relative;
  display: flex;
  gap: 16px;
  margin-top: 48px;
  height: 44px;
}

.scale-frame {
  position: absolute;
  left: 546px;
  top: -32px;
  width: 382px;
  height: 92px;
  box-sizing: border-box;
  border: 4px solid #1f6bcc;
  border-radius: 12px;
  background-color: #e6f2ff;
  box-shadow: 0 10px 24px rgba(31, 107, 204, 0.14);
}

.scale-badge {
  position: absolute;
  left: 113px;
  top: -20px;
  width: 148px;
  height: 40px;
  line-height: 40px;
  border-radius: 18px;
  background-color: #1f6bcc;
  color: #fff;
  font-size: 20.5px;
  font-weight: 600;
  text-align: center;
}

.chip {
  position: relative;
  width: 170px;
  height: 44px;
  line-height: 44px;
  border-radius: 8px;
  font-size: 18px;
  font-weight: 700;
  text-align: center;
  color: #fff;
  text-shadow: 0 1px 2px rgba(0, 0, 0, 0.3);
}

.chip-na {
  background: linear-gradient(90deg, #c6c9cc, #d8d9da);
  color: #16181c;
  text-shadow: none;
}

.chip-low {
  background: linear-gradient(90deg, #f33630, #ff6a42);
}

.chip-mid {
  background: linear-gradient(90deg, #f78d3f, #f0dc62);
}

.chip-good {
  background: linear-gradient(90deg, #ecf94e, #a5ec45);
}

.chip-high {
  background: linear-gradient(90deg, #86d83a, #26a834);
}

.ap-badge {
  width: 45px;
  height: 45px;
  line-height: 45px;
  border-radius: 50%;
  background-color: #111;
  color: #fff;
  text-align: center;
  font-size: 24px;
  font-weight: 600;
  margin: 14px 0 0 68px;
}

.stats {
  display: flex;
  margin: 22px 0 0 27px;
}

.stat {
  display: flex;
  flex-direction: column;
  gap: 34px;
}

.stat-aps {
  width: 205px;
}

.stat-density {
  width: 366px;
}

.stat b {
  font-size: 28.3px;
  line-height: 36px;
  font-weight: 600;
  color: #2b303a;
}

.stat span {
  font-size: 25px;
  line-height: 32px;
  color: #6b7280;
}

.zoom-tools {
  position: absolute;
  right: 32px;
  top: 811px;
  width: 95px;
  height: 272px;
  box-sizing: border-box;
  padding-top: 13px;
  background-color: #fff;
  border-radius: 12px;
  box-shadow: 0 8px 24px rgba(40, 50, 60, 0.12);
  display: flex;
  flex-direction: column;
  align-items: center;
  gap: 16px;
}

.zoom-btn {
  width: 71px;
  height: 71px;
  box-sizing: border-box;
  border: 3px solid #d3d6db;
  border-radius: 14px;
  display: flex;
  align-items: center;
  justify-content: center;
}

.zoom-off {
  border-color: #eceef0;
}

.review {
  display: flex;
  justify-content: space-between;
  align-items: flex-end;
  height: 164px;
  box-sizing: border-box;
  border-top: 2px solid #e6e6ec;
  padding: 27px 32px 6px 44px;
}

.review-title {
  font-size: 28.2px;
  line-height: 36px;
  font-weight: 500;
  color: #1d2026;
}

.review-choices {
  display: flex;
  gap: 25px;
  margin-top: 21px;
}

.choice {
  display: flex;
  align-items: center;
  gap: 17px;
  height: 72px;
  box-sizing: border-box;
  padding: 0 35px 0 23px;
  border: 4px solid #8c939c;
  border-radius: 13px;
  font-size: 28.3px;
  color: #1d2026;
}

.choice-blue {
  background-color: #d9f1ff;
}

.choice-yellow {
  background-color: #faeeb9;
  padding-right: 23px;
}

.check {
  width: 32px;
  height: 32px;
  box-sizing: border-box;
  border: 4px solid #8c939c;
  border-radius: 8px;
  background-color: #fff;
  display: flex;
  align-items: center;
  justify-content: center;
}

.check-on {
  background-color: #0d6efd;
}

.review-actions {
  display: flex;
  gap: 24px;
  margin-bottom: 5px;
}

.btn {
  height: 68px;
  box-sizing: border-box;
  border-radius: 13px;
  font-family: inherit;
  font-size: 28px;
  font-weight: 700;
}

.btn-outline {
  width: 108px;
  background-color: #fff;
  border: 4px solid #1f6bcc;
  color: #1f6bcc;
}

.btn-primary {
  width: 164px;
  background-color: #1f6bcc;
  border: none;
  color: #fff;
  box-shadow: 0 0 0 4px #c3dbff, 0 0 0 8px #1f6bcc;
  display: flex;
  align-items: center;
  justify-content: space-between;
  padding: 0 25px 0 24px;
}
```
